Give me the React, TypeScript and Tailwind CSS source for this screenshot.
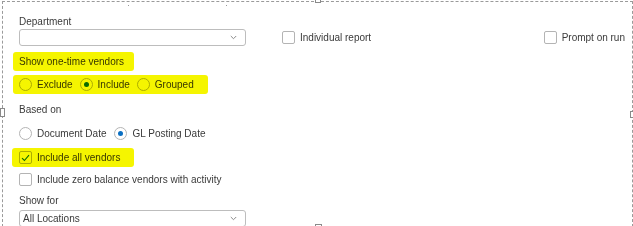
import React from "react";

const font = { fontFamily: '"Liberation Sans", Arial, sans-serif' };

function Chevron() {
  return (
    <svg width="7" height="5" viewBox="0 0 7 5" className="shrink-0">
      <path d="M0.8 1 L3.5 3.7 L6.2 1" fill="none" stroke="#8a8a8a" strokeWidth="1" />
    </svg>
  );
}

function Select({ value }: { value?: string }) {
  return (
    <div className="flex h-[17px] w-[227px] items-center justify-between rounded-[3px] border border-[#bdbdbd] bg-white pl-[3px] pr-[8px]">
      <span className="text-[10px] leading-[12px] text-[#3a3a3a]">{value ?? ""}</span>
      <Chevron />
    </div>
  );
}

function Checkbox({ checked }: { checked?: boolean }) {
  return (
    <span className="flex h-[13px] w-[13px] shrink-0 items-center justify-center rounded-[2px] border border-[#b4b4b4] bg-white">
      {checked && (
        <svg width="9" height="8" viewBox="0 0 9 8">
          <path d="M1 4.2 L3.4 6.5 L8 1.2" fill="none" stroke="#0a6fc2" strokeWidth="1.1" />
        </svg>
      )}
    </span>
  );
}

function Radio({ checked }: { checked?: boolean }) {
  return (
    <span className="flex h-[13px] w-[13px] shrink-0 items-center justify-center rounded-full border border-[#b4b4b4] bg-white">
      {checked && <span className="h-[5px] w-[5px] rounded-full bg-[#0a6fc2]" />}
    </span>
  );
}

function Option({ children, label }: { children: React.ReactNode; label: string }) {
  return (
    <div className="flex items-center gap-[5px]">
      {children}
      <span className="text-[10px] leading-[12px] text-[#3a3a3a]">{label}</span>
    </div>
  );
}

function Highlight({ className }: { className: string }) {
  return <div className={`pointer-events-none absolute bg-[#f5f500] mix-blend-multiply ${className}`} />;
}

export default function App() {
  return (
    <div className="relative h-[226px] w-[633px] overflow-hidden bg-white" style={font}>
      {/* selection frame */}
      <div className="pointer-events-none absolute left-[2px] top-[1px] h-[226px] w-[631px] border border-dashed border-[#9a9a9a]" />
      <div className="pointer-events-none absolute left-[315px] top-[-2px] h-[5px] w-[6px] border border-[#8a8a8a] bg-white" />
      <div className="pointer-events-none absolute left-[0px] top-[108px] h-[9px] w-[5px] border border-[#8a8a8a] bg-white" />
      <div className="pointer-events-none absolute left-[630px] top-[111px] h-[7px] w-[4px] border border-[#8a8a8a] bg-white" />
      <div className="pointer-events-none absolute left-[315px] top-[224px] h-[5px] w-[7px] border border-[#8a8a8a] bg-white" />
      <div className="pointer-events-none absolute left-[128px] top-[5px] h-px w-px bg-[#999]" />
      <div className="pointer-events-none absolute left-[226px] top-[5px] h-px w-px bg-[#999]" />

      <div className="pl-[19px] pr-[8px] pt-[16px] text-[10px] leading-[12px] text-[#3a3a3a]">
        <div className="flex">
          <div className="flex w-[227px] flex-col">
            <div className="h-[12px]">Department</div>
            <div className="mt-[1px]">
              <Select />
            </div>
          </div>
          <div className="ml-[36px] mt-[15px] flex items-start">
            <Option label="Individual report">
              <Checkbox />
            </Option>
          </div>
          <div className="ml-auto mt-[15px] flex items-start">
            <Option label="Prompt on run">
              <Checkbox />
            </Option>
          </div>
        </div>

        <div className="relative mt-[10px] h-[12px] w-fit">
          Show one-time vendors
          <Highlight className="left-[-6px] right-[-10px] top-[-4px] bottom-[-3px] rounded-[3px]" />
        </div>

        <div className="relative mt-[10px] flex w-fit items-center gap-[7px]">
          <Option label="Exclude">
            <Radio />
          </Option>
          <Option label="Include">
            <Radio checked />
          </Option>
          <Option label="Grouped">
            <Radio />
          </Option>
          <Highlight className="left-[-6px] right-[-14px] top-[-3px] bottom-[-3px] rounded-[3px]" />
        </div>

        <div className="mt-[13px] h-[12px]">Based on</div>

        <div className="mt-[11px] flex items-center gap-[8px]">
          <Option label="Document Date">
            <Radio />
          </Option>
          <Option label="GL Posting Date">
            <Radio checked />
          </Option>
        </div>

        <div className="relative mt-[11px] w-fit">
          <Option label="Include all vendors">
            <Checkbox checked />
          </Option>
          <Highlight className="left-[-7px] right-[-14px] top-[-3px] bottom-[-3px] rounded-[3px]" />
        </div>

        <div className="mt-[9px]">
          <Option label="Include zero balance vendors with activity">
            <Checkbox />
          </Option>
        </div>

        <div className="mt-[9px] h-[12px]">Show for</div>
        <div className="mt-[3px]">
          <Select value="All Locations" />
        </div>
      </div>
    </div>
  );
}
